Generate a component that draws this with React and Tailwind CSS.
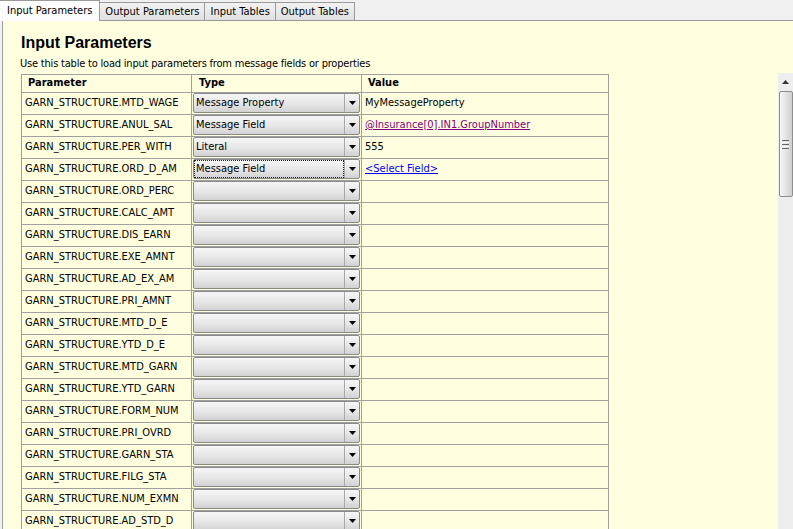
import React from 'react';

const rows = [
  { name: 'MTD_WAGE', type: 'Message Property', value: 'MyMessageProperty', kind: 'text' },
  { name: 'ANUL_SAL', type: 'Message Field', value: '@Insurance[0].IN1.GroupNumber', kind: 'visited' },
  { name: 'PER_WITH', type: 'Literal', value: '555', kind: 'text' },
  { name: 'ORD_D_AM', type: 'Message Field', value: '<Select Field>', kind: 'link', focus: true },
  { name: 'ORD_PERC' },
  { name: 'CALC_AMT' },
  { name: 'DIS_EARN' },
  { name: 'EXE_AMNT' },
  { name: 'AD_EX_AM' },
  { name: 'PRI_AMNT' },
  { name: 'MTD_D_E' },
  { name: 'YTD_D_E' },
  { name: 'MTD_GARN' },
  { name: 'YTD_GARN' },
  { name: 'FORM_NUM' },
  { name: 'PRI_OVRD' },
  { name: 'GARN_STA' },
  { name: 'FILG_STA' },
  { name: 'NUM_EXMN' },
  { name: 'AD_STD_D' }
];

const tabs = ['Input Parameters', 'Output Parameters', 'Input Tables', 'Output Tables'];

const Arrow = () => (
  <svg width="7" height="4" viewBox="0 0 7 4">
    <path d="M0 0h7L3.5 4z" fill="#000" />
  </svg>
);

const Dropdown = ({ label, focus }) => (
  <div className="flex h-[20px] border border-[#8a8a8a] rounded-[2px] bg-gradient-to-b from-[#f6f6f6] via-[#e8e8e8] to-[#d2d2d2]">
    <div className="flex-1 flex items-center px-[1px] py-[1px]">
      <div className={`flex-1 h-full flex items-center pl-[1px] ${focus ? 'outline outline-1 outline-dotted outline-[#222]' : ''}`}>
        {label}
      </div>
    </div>
    <div className="w-[15px] flex items-center justify-center border-l border-[#a8a8a8]">
      <Arrow />
    </div>
  </div>
);

const App = () => {
  return (
    <div
      className="w-[793px] h-[529px] overflow-hidden bg-[#f0f0f0] flex flex-col text-[11px] text-black"
      style={{ fontFamily: '"DejaVu Sans Condensed", "DejaVu Sans", sans-serif' }}
    >
      {/* tabs */}
      <div className="h-[21px] flex items-end border-b border-[#9a9a9a] relative">
        {tabs.map((t, i) =>
          i === 0 ? (
            <div
              key={t}
              className="h-[21px] px-[7px] pt-[1px] flex items-center bg-[#fcfcfc] border-t border-r border-[#9a9a9a] -mb-[1px] relative z-10"
            >
              {t}
            </div>
          ) : (
            <div
              key={t}
              className="h-[18px] px-[5px] pt-[1px] flex items-center bg-gradient-to-b from-[#f2f2f2] to-[#e0e0e0] border-t border-r border-[#9a9a9a]"
            >
              {t}
            </div>
          )
        )}
      </div>

      {/* panel */}
      <div className="flex-1 flex ml-[2px] border-l border-[#a0a0a0] bg-[#ffffe0]">
        <div className="flex-1 flex flex-col pl-[18px] min-w-0">
          <h1
            className="text-[16px] font-bold leading-none mt-[14px]"
            style={{ fontFamily: '"Liberation Sans", Arial, sans-serif' }}
          >
            Input Parameters
          </h1>
          <p className="mt-[6px] leading-[14px] -ml-[1px] tracking-[-0.2px]">Use this table to load input parameters from message fields or properties</p>
          <table className="mt-[3px] border-collapse w-[588px] table-fixed">
            <thead>
              <tr className="h-[17px]">
                <th className="w-[170px] text-left font-bold border border-[#a0a0a0] pl-[6px]">Parameter</th>
                <th className="w-[170px] text-left font-bold border border-[#a0a0a0] pl-[7px]">Type</th>
                <th className="text-left font-bold border border-[#a0a0a0] pl-[6px]">Value</th>
              </tr>
            </thead>
            <tbody>
              {rows.map((r) => (
                <tr key={r.name} className="h-[22px]">
                  <td className="border border-[#a0a0a0] pl-[3px] whitespace-nowrap overflow-hidden">GARN_STRUCTURE.{r.name}</td>
                  <td className="border border-[#a0a0a0] p-0 px-[1px]">
                    <Dropdown label={r.type || ''} focus={r.focus} />
                  </td>
                  <td className="border border-[#a0a0a0] pl-[3px] whitespace-nowrap">
                    {r.kind === 'text' && r.value}
                    {r.kind === 'visited' && <span className="text-[#800080] underline">{r.value}</span>}
                    {r.kind === 'link' && <span className="text-[#0000ff] underline">{r.value}</span>}
                  </td>
                </tr>
              ))}
            </tbody>
          </table>
        </div>

        {/* scrollbar */}
        <div className="w-[15px] mt-[52px] bg-[#eeeeee] flex flex-col items-center">
          <div className="h-[18px] flex items-center justify-center">
            <svg width="7" height="4" viewBox="0 0 7 4">
              <path d="M3.5 0L7 4H0z" fill="#333" />
            </svg>
          </div>
          <div className="w-[14px] h-[106px] border border-[#8e8e8e] rounded-[2px] bg-gradient-to-r from-[#f4f4f4] via-[#e4e4e4] to-[#cfcfcf] flex flex-col items-center justify-center gap-[1px]">
            <div className="w-[7px] h-[1px] bg-[#666]" />
            <div className="w-[7px] h-[1px] bg-[#fff]" />
            <div className="w-[7px] h-[1px] bg-[#666]" />
            <div className="w-[7px] h-[1px] bg-[#fff]" />
            <div className="w-[7px] h-[1px] bg-[#666]" />
          </div>
        </div>
      </div>
    </div>
  );
};

export default App;
